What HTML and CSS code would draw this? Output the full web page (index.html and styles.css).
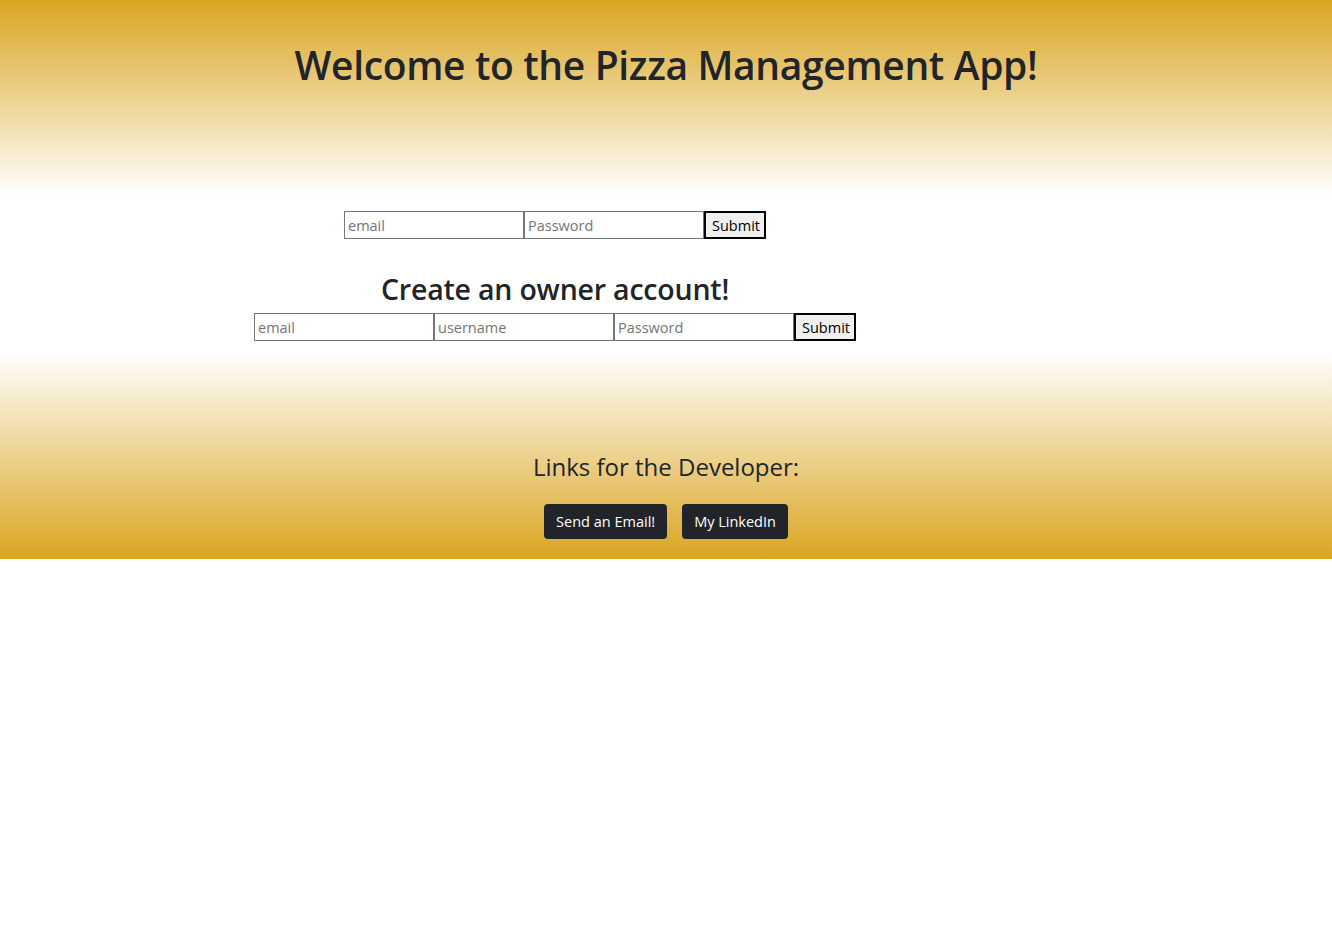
FILE: index.html
```html
<!DOCTYPE html>
<html>
<head>
<meta charset="utf-8">
<link rel="stylesheet" href="styles.css">
</head>
<body>
<header class="hero">
  <h1 class="title">Welcome to the Pizza Management App!</h1>
</header>
<main class="main">
  <form class="form-row"><input class="field" placeholder="email"><input class="field" type="password" placeholder="Password"><button class="submit" type="button">Submit</button></form>
  <h2 class="subtitle">Create an owner account!</h2>
  <form class="form-row"><input class="field" placeholder="email"><input class="field" placeholder="username"><input class="field" type="password" placeholder="Password"><button class="submit" type="button">Submit</button></form>
</main>
<footer class="footer">
  <h4 class="footer-title">Links for the Developer:</h4>
  <div class="links">
    <a class="btn-dark" href="#">Send an Email!</a>
    <a class="btn-dark" href="#">My LinkedIn</a>
  </div>
</footer>
</body>
</html>
```

FILE: styles.css
```css
* { box-sizing: border-box; }
body {
  margin: 0;
  font-family: "Open Sans", "Noto Sans", sans-serif;
  color: #212529;
  background: #fff;
}
.hero {
  height: 195px;
  padding-top: 41px;
  background: linear-gradient(to bottom, #daa520 0%, #ffffff 100%);
  text-align: center;
}
.title {
  margin: 0;
  font-size: 39px;
  font-weight: 600;
  line-height: 48px;
  letter-spacing: -0.35px;
}
.main {
  width: 1110px;
  padding-top: 16px;
  padding-bottom: 11px;
  text-align: center;
}
.form-row {
  display: flex;
  justify-content: center;
  margin: 0;
}
.field {
  width: 180px;
  height: 28px;
  margin: 0;
  padding: 1px 3px;
  border: 1px solid #767676;
  border-radius: 0;
  font-family: "Open Sans", sans-serif;
  font-size: 14.5px;
  color: #212529;
  background: #fff;
}
.field::placeholder { color: #757575; }
.submit {
  height: 28px;
  width: 62px;
  margin: 0;
  padding: 0 6px;
  border: 2px solid #000;
  border-radius: 0;
  background: #efefef;
  font-family: "Open Sans", sans-serif;
  font-size: 14.5px;
  color: #000;
}
.subtitle {
  margin: 32px 0 6px;
  font-size: 28.5px;
  font-weight: 600;
  line-height: 36px;
  letter-spacing: -0.2px;
}
.footer {
  height: 207px;
  padding-top: 100px;
  background: linear-gradient(to bottom, #ffffff 0%, #daa520 100%);
  text-align: center;
}
.footer-title {
  margin: 0 0 23px;
  font-size: 24px;
  font-weight: 500;
  line-height: 29px;
}
.links {
  display: flex;
  justify-content: center;
  gap: 15px;
}
.btn-dark {
  display: inline-block;
  height: 35px;
  padding: 0 12px;
  line-height: 35px;
  border-radius: 4px;
  background: #212529;
  color: #fff;
  font-size: 14.5px;
  text-decoration: none;
}
```
